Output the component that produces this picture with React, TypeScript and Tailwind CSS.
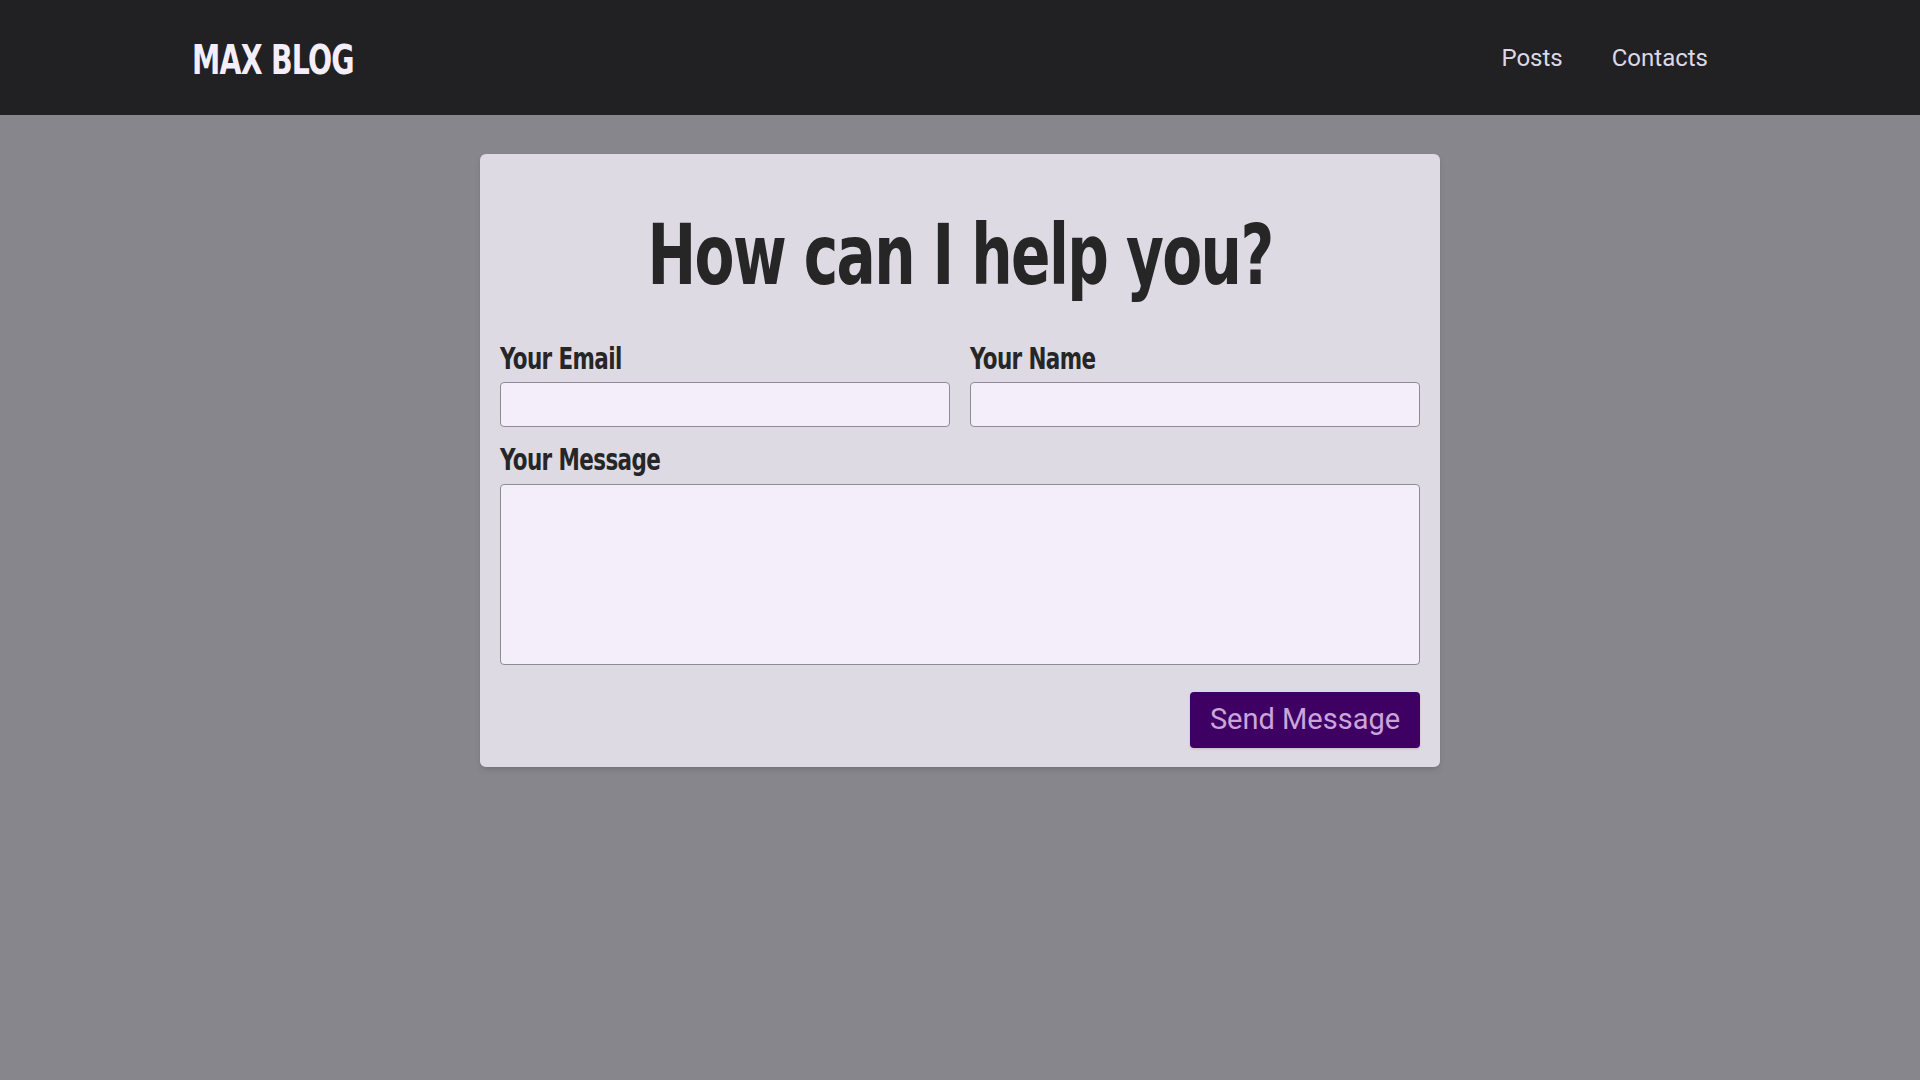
import React from "react";

const condensed = { fontFamily: "'Liberation Sans Narrow', 'DejaVu Sans Condensed', 'Liberation Sans', sans-serif" };
const roboto = { fontFamily: "Roboto, 'Liberation Sans', sans-serif" };

export default function App() {
  return (
    <div className="min-h-screen bg-[#88868d]" style={roboto}>
      <header className="h-[115px] bg-[#212023] flex items-center justify-between px-[192px]">
        <div
          className="pt-[6px] text-[41px] leading-none font-bold text-[#f3eefa] tracking-tight scale-x-[0.77] origin-left"
          style={condensed}
        >
          MAX BLOG
        </div>
        <nav className="flex items-center gap-[9px]">
          <a className="px-5 text-[24px] text-[#dcd8e8]">Posts</a>
          <a className="px-5 text-[24px] text-[#dcd8e8]">Contacts</a>
        </nav>
      </header>
      <main className="pt-[39px]">
        <div className="mx-auto w-[960px] bg-[#dddae4] rounded-md shadow-md px-5 pt-5 pb-[19px] flex flex-col">
          <h1
            className="mt-[39px] text-center text-[84px] leading-none font-bold text-[#262626] tracking-tight scale-x-[0.77] origin-center"
            style={condensed}
          >
            How can I help you?
          </h1>
          <div className="mt-[46px] grid grid-cols-2 gap-x-5">
            <div className="flex flex-col">
              <label className="mb-2 text-[31px] leading-none font-bold text-[#262626] tracking-tight scale-x-[0.77] origin-left" style={condensed}>
                Your Email
              </label>
              <input className="h-[45px] rounded bg-[#f3eefa] border border-[#8f8b94]" />
            </div>
            <div className="flex flex-col">
              <label className="mb-2 text-[31px] leading-none font-bold text-[#262626] tracking-tight scale-x-[0.77] origin-left" style={condensed}>
                Your Name
              </label>
              <input className="h-[45px] rounded bg-[#f3eefa] border border-[#8f8b94]" />
            </div>
          </div>
          <div className="mt-[17px] flex flex-col">
            <label className="mb-[9px] text-[31px] leading-none font-bold text-[#262626] tracking-tight scale-x-[0.77] origin-left" style={condensed}>
              Your Message
            </label>
            <textarea className="h-[181px] rounded bg-[#f3eefa] border border-[#8f8b94] resize-none" />
          </div>
          <div className="mt-[27px] flex justify-end">
            <button className="w-[230px] h-[56px] rounded bg-[#3f0064] text-[29px] text-[#c9a6da] shadow">
              Send Message
            </button>
          </div>
        </div>
      </main>
    </div>
  );
}
